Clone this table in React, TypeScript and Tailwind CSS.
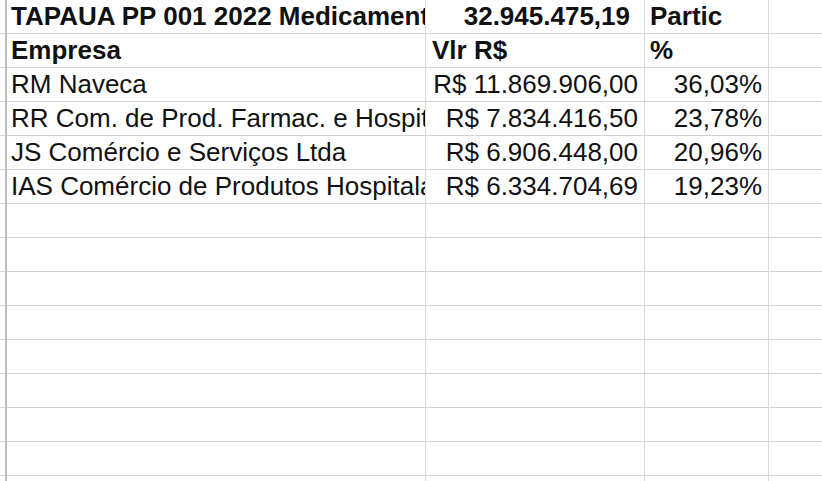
import React from 'react';

type Row = { a?: string; b?: string; c?: string; bold?: boolean; bRight?: boolean; cRight?: boolean; bPad?: string };

const rows: Row[] = [
  { a: 'TAPAUA PP 001 2022 Medicamentos', b: '32.945.475,19', c: 'Partic', bold: true, bRight: true, bPad: 'pr-[14px]' },
  { a: 'Empresa', b: 'Vlr R$', c: '%', bold: true },
  { a: 'RM Naveca', b: 'R$ 11.869.906,00', c: '36,03%', bRight: true, cRight: true },
  { a: 'RR Com. de Prod. Farmac. e Hospitalares', b: 'R$ 7.834.416,50', c: '23,78%', bRight: true, cRight: true },
  { a: 'JS Comércio e Serviços Ltda', b: 'R$ 6.906.448,00', c: '20,96%', bRight: true, cRight: true },
  { a: 'IAS Comércio de Produtos Hospitalares', b: 'R$ 6.334.704,69', c: '19,23%', bRight: true, cRight: true },
];

// empty rows to fill the rest of the sheet
const blanks = Array.from({ length: 9 }, () => ({} as Row));

const App: React.FC = () => {
  const all = [...rows, ...blanks];
  return (
    <div
      className="w-[822px] h-[481px] overflow-hidden bg-white text-[#111] flex"
      style={{ fontFamily: '"Liberation Sans", Arial, sans-serif' }}
    >
      {/* row header edge */}
      <div className="w-[5px] shrink-0 flex flex-col">
        {all.map((_, i) => (
          <div key={i} className="h-[34px] shrink-0 border-b border-[#d3d3d3]" />
        ))}
      </div>

      {/* sheet */}
      <div className="flex-1 flex flex-col border-l-2 border-[#bcbcbc]">
        {all.map((r, i) => (
          <div
            key={i}
            className={`h-[34px] shrink-0 grid grid-cols-[419px_219px_124px_1fr] border-b border-[#d3d3d3] text-[26px] leading-[33px] ${
              r.bold ? 'font-bold' : 'font-normal'
            }`}
          >
            <div className="border-r border-[#dadada] pl-[4px] whitespace-nowrap overflow-hidden">{r.a}</div>
            <div
              className={`border-r border-[#dadada] whitespace-nowrap overflow-hidden ${
                r.bRight ? `text-right ${r.bPad ?? 'pr-[6px]'}` : 'pl-[6px]'
              }`}
            >
              {r.b}
            </div>
            <div
              className={`border-r border-[#dadada] whitespace-nowrap overflow-hidden ${
                r.cRight ? 'text-right pr-[6px]' : 'pl-[5px]'
              }`}
            >
              {r.c}
            </div>
            <div />
          </div>
        ))}
      </div>
    </div>
  );
};

export default App;
